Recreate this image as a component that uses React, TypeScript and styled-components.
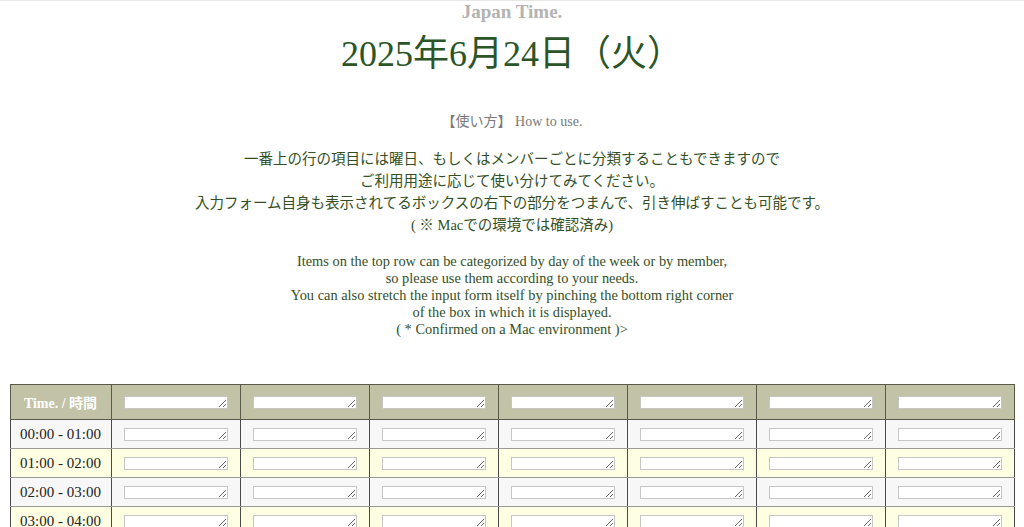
import React from "react";
import styled, { createGlobalStyle } from "styled-components";

const Global = createGlobalStyle`
  html, body { margin: 0; padding: 0; background: #fff; }
  body {
    font-family: "Liberation Serif", "Noto Sans CJK JP", serif;
    border-top: 1px solid #e6e6e6;
  }
`;

const Page = styled.div`
  display: flex;
  flex-direction: column;
  align-items: center;
  text-align: center;
`;

const Brand = styled.div`
  font-size: 19px;
  line-height: 21px;
  font-weight: bold;
  color: #b3b3b3;
`;

const DateLine = styled.h1`
  margin: 12px 0 0;
  font-size: 36px;
  line-height: 40px;
  font-weight: normal;
  color: #2b5526;
`;

const HowTo = styled.div`
  margin-top: 38px;
  font-size: 14px;
  line-height: 20px;
  color: #7a7a7a;
`;

const Para = styled.p<{ $lh: number; $mt: number; $fs: number }>`
  margin: ${(p) => p.$mt}px 0 0;
  font-size: ${(p) => p.$fs}px;
  line-height: ${(p) => p.$lh}px;
  color: #344f26;
`;

const Table = styled.table`
  margin: 46px auto 0;
  width: 1005px;
  border-collapse: collapse;
  table-layout: fixed;
`;

const HeadCell = styled.th`
  background: #c2c2a6;
  color: #fff;
  font-size: 14px;
  font-weight: bold;
  height: 35px;
  padding: 0;
  border: 1px solid #5a5a4a;
  box-sizing: border-box;
`;

const Row = styled.tr<{ $alt: boolean }>`
  background: ${(p) => (p.$alt ? "#fefee2" : "#f7f7f7")};
`;

const Cell = styled.td`
  height: 29px;
  padding: 0;
  font-size: 15px;
  color: #222;
  border-left: 1px solid #4a4a4a;
  border-right: 1px solid #4a4a4a;
  border-top: 1px solid #9a9a9a;
  border-bottom: 1px solid #9a9a9a;
  box-sizing: border-box;
`;

const Field = styled.textarea`
  display: block;
  margin: 0 auto;
  box-sizing: border-box;
  width: 104px;
  height: 13px;
  padding: 0;
  border: 1px solid #c6c6c6;
  background: #fff;
  font-size: 10px;
  line-height: 10px;
  overflow: hidden;
  resize: both;
`;

const times = [
  "00:00 - 01:00",
  "01:00 - 02:00",
  "02:00 - 03:00",
  "03:00 - 04:00",
  "04:00 - 05:00",
];

const cols = Array.from({ length: 7 });

export default function App() {
  return (
    <>
      <Global />
      <Page>
        <Brand>Japan Time.</Brand>
        <DateLine>2025年6月24日（火）</DateLine>
        <HowTo>【使い方】 How to use.</HowTo>
        <Para $mt={16} $lh={22} $fs={14.5}>
          一番上の行の項目には曜日、もしくはメンバーごとに分類することもできますので
          <br />
          ご利用用途に応じて使い分けてみてください。
          <br />
          入力フォーム自身も表示されてるボックスの右下の部分をつまんで、引き伸ばすことも可能です。
          <br />
          ( ※ Macでの環境では確認済み)
        </Para>
        <Para $mt={17} $lh={17} $fs={14.4}>
          Items on the top row can be categorized by day of the week or by member,
          <br />
          so please use them according to your needs.
          <br />
          You can also stretch the input form itself by pinching the bottom right corner
          <br />
          of the box in which it is displayed.
          <br />( * Confirmed on a Mac environment )&gt;
        </Para>
        <Table>
          <colgroup>
            <col style={{ width: 101 }} />
            {cols.map((_, i) => (
              <col key={i} style={{ width: 129 }} />
            ))}
          </colgroup>
          <thead>
            <tr>
              <HeadCell>Time. / 時間</HeadCell>
              {cols.map((_, i) => (
                <HeadCell key={i}>
                  <Field />
                </HeadCell>
              ))}
            </tr>
          </thead>
          <tbody>
            {times.map((t, r) => (
              <Row key={t} $alt={r % 2 === 1}>
                <Cell>{t}</Cell>
                {cols.map((_, i) => (
                  <Cell key={i}>
                    <Field />
                  </Cell>
                ))}
              </Row>
            ))}
          </tbody>
        </Table>
      </Page>
    </>
  );
}
